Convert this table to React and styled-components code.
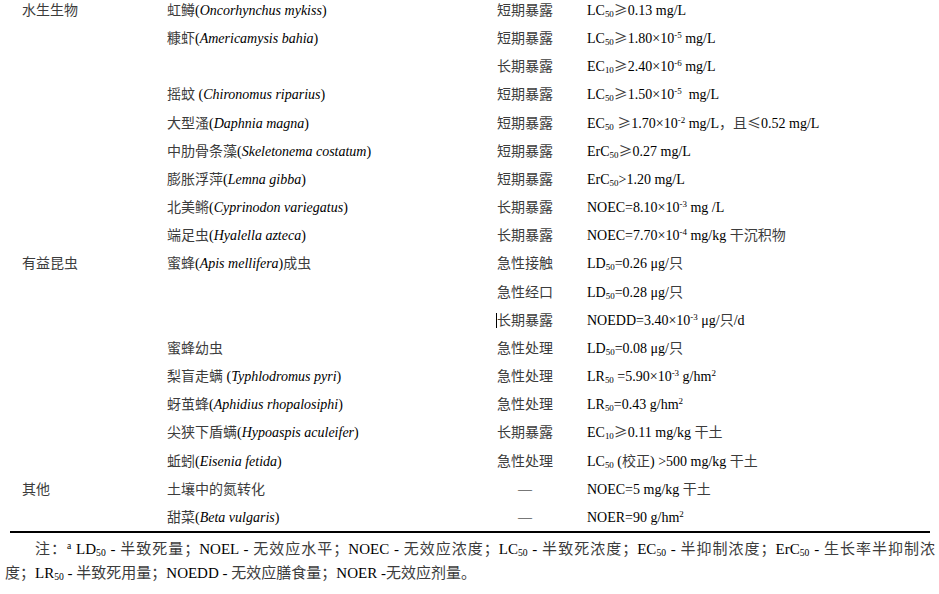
import React from "react";
import styled, { createGlobalStyle } from "styled-components";

const GlobalStyle = createGlobalStyle`
  html, body {
    margin: 0;
    padding: 0;
    background: #ffffff;
  }
  body {
    font-family: "Liberation Serif", "Noto Sans CJK SC", serif;
    color: #000;
  }
`;

const Page = styled.div`
  width: 939px;
  height: 594px;
  overflow: hidden;
  display: flex;
  flex-direction: column;
`;

const Table = styled.div`
  margin: 1px 9px 0 10px;
  padding-bottom: 3px;
  display: grid;
  grid-template-columns: 157px 330px 90px 1fr;
  grid-auto-rows: 20px;
  row-gap: 8.17px;
  border-bottom: 2px solid #000;
  font-size: 14px;
`;

const Cell = styled.div`
  line-height: 20px;
  white-space: nowrap;
  padding-left: ${(p) => (p.$first ? "12px" : "0")};
  text-align: ${(p) => (p.$center ? "center" : "left")};
  width: ${(p) => (p.$center ? "56px" : "auto")};
`;

const Caret = styled.span`
  display: inline-block;
  width: 1px;
  height: 15px;
  background: #000;
  margin-left: -1px;
  vertical-align: -3px;
`;

const Han = styled.span`
  font-family: "Noto Sans CJK SC", sans-serif;
  color: #3c3c3c;
  line-height: 1;
`;

const Sp = styled.i`
  font-family: "Liberation Serif", serif;
  font-style: italic;
`;

const Sub = styled.span`
  font-size: 0.64em;
  line-height: 0;
  vertical-align: -0.18em;
`;

const Sup = styled.span`
  font-size: 0.64em;
  line-height: 0;
  vertical-align: 0.55em;
`;

const Note = styled.div`
  margin: 4px 0 0 5px;
  font-size: 15px;
  line-height: 24px;
  white-space: nowrap;
`;

const NoteLine = styled.div`
  width: ${(p) => (p.$full ? "900px" : "auto")};
  padding-left: ${(p) => (p.$full ? "30px" : "0")};
  text-align: ${(p) => (p.$full ? "justify" : "left")};
  text-align-last: ${(p) => (p.$full ? "justify" : "auto")};
  white-space: ${(p) => (p.$full ? "normal" : "nowrap")};
`;

// wrap runs of Chinese characters so they get the lighter CJK face
function T({ children }) {
  const parts = String(children).split(/([\u2000-\u206f\u2260-\u2267\u3000-\u9fff\uff00-\uffef]+)/);
  return parts.map((s, i) =>
    i % 2 === 1 ? <Han key={i}>{s}</Han> : s ? <React.Fragment key={i}>{s}</React.Fragment> : null
  );
}

const dash = "—";

const rows = [
  ["水生生物", <><T>虹鳟</T>(<Sp>Oncorhynchus mykiss</Sp>)</>, "短期暴露", <>LC<Sub>50</Sub><T>≥</T>0.13 mg/L</>],
  ["", <><T>糠虾</T>(<Sp>Americamysis bahia</Sp>)</>, "短期暴露", <>LC<Sub>50</Sub><T>≥</T>1.80×10<Sup>-5</Sup> mg/L</>],
  ["", null, "长期暴露", <>EC<Sub>10</Sub><T>≥</T>2.40×10<Sup>-6</Sup> mg/L</>],
  ["", <><T>摇蚊</T> (<Sp>Chironomus riparius</Sp>)</>, "短期暴露", <>LC<Sub>50</Sub><T>≥</T>1.50×10<Sup>-5</Sup>{"\u00a0 "}mg/L</>],
  ["", <><T>大型溞</T>(<Sp>Daphnia magna</Sp>)</>, "短期暴露", <>EC<Sub>50</Sub> <T>≥</T>1.70×10<Sup>-2</Sup> mg/L<T>，且≤</T>0.52 mg/L</>],
  ["", <><T>中肋骨条藻</T>(<Sp>Skeletonema costatum</Sp>)</>, "短期暴露", <>ErC<Sub>50</Sub><T>≥</T>0.27 mg/L</>],
  ["", <><T>膨胀浮萍</T>(<Sp>Lemna gibba</Sp>)</>, "短期暴露", <>ErC<Sub>50</Sub>&gt;1.20 mg/L</>],
  ["", <><T>北美鳉</T>(<Sp>Cyprinodon variegatus</Sp>)</>, "长期暴露", <>NOEC=8.10×10<Sup>-3</Sup> mg /L</>],
  ["", <><T>端足虫</T>(<Sp>Hyalella azteca</Sp>)</>, "长期暴露", <>NOEC=7.70×10<Sup>-4</Sup> mg/kg <T>干沉积物</T></>],
  ["有益昆虫", <><T>蜜蜂</T>(<Sp>Apis mellifera</Sp>)<T>成虫</T></>, "急性接触", <>LD<Sub>50</Sub>=0.26 μg/<T>只</T></>],
  ["", null, "急性经口", <>LD<Sub>50</Sub>=0.28 μg/<T>只</T></>],
  ["", null, "长期暴露", <>NOEDD=3.40×10<Sup>-3</Sup> μg/<T>只</T>/d</>, true],
  ["", <T>蜜蜂幼虫</T>, "急性处理", <>LD<Sub>50</Sub>=0.08 μg/<T>只</T></>],
  ["", <><T>梨盲走螨</T> (<Sp>Typhlodromus pyri</Sp>)</>, "急性处理", <>LR<Sub>50</Sub> =5.90×10<Sup>-3</Sup> g/hm<Sup>2</Sup></>],
  ["", <><T>蚜茧蜂</T>(<Sp>Aphidius rhopalosiphi</Sp>)</>, "急性处理", <>LR<Sub>50</Sub>=0.43 g/hm<Sup>2</Sup></>],
  ["", <><T>尖狭下盾螨</T>(<Sp>Hypoaspis aculeifer</Sp>)</>, "长期暴露", <>EC<Sub>10</Sub><T>≥</T>0.11 mg/kg <T>干土</T></>],
  ["", <><T>蚯蚓</T>(<Sp>Eisenia fetida</Sp>)</>, "急性处理", <>LC<Sub>50</Sub> (<T>校正</T>) &gt;500 mg/kg <T>干土</T></>],
  ["其他", <T>土壤中的氮转化</T>, dash, <>NOEC=5 mg/kg <T>干土</T></>],
  ["", <><T>甜菜</T>(<Sp>Beta vulgaris</Sp>)</>, dash, <>NOER=90 g/hm<Sup>2</Sup></>],
];

export default function App() {
  return (
    <Page>
      <GlobalStyle />
      <Table>
        {rows.map(([group, species, exposure, value, caret], i) => (
          <React.Fragment key={i}>
            <Cell $first>
              <T>{group}</T>
            </Cell>
            <Cell>{species}</Cell>
            <Cell $center={exposure === dash}>
              {caret && <Caret />}
              {exposure === dash ? exposure : <T>{exposure}</T>}
            </Cell>
            <Cell>{value}</Cell>
          </React.Fragment>
        ))}
      </Table>
      <Note>
        <NoteLine $full>
          <T>注：</T>
          <Sup>a</Sup> LD<Sub>50</Sub> - <T>半致死量；</T>NOEL - <T>无效应水平；</T>NOEC - <T>无效应浓度；</T>LC<Sub>50</Sub> - <T>半致死浓度；</T>EC<Sub>50</Sub> - <T>半抑制浓度；</T>ErC<Sub>50</Sub> - <T>生长率半抑制浓</T>
        </NoteLine>
        <NoteLine>
          <T>度；</T>LR<Sub>50</Sub> - <T>半致死用量；</T>NOEDD - <T>无效应膳食量；</T>NOER -<T>无效应剂量。</T>
        </NoteLine>
      </Note>
    </Page>
  );
}
